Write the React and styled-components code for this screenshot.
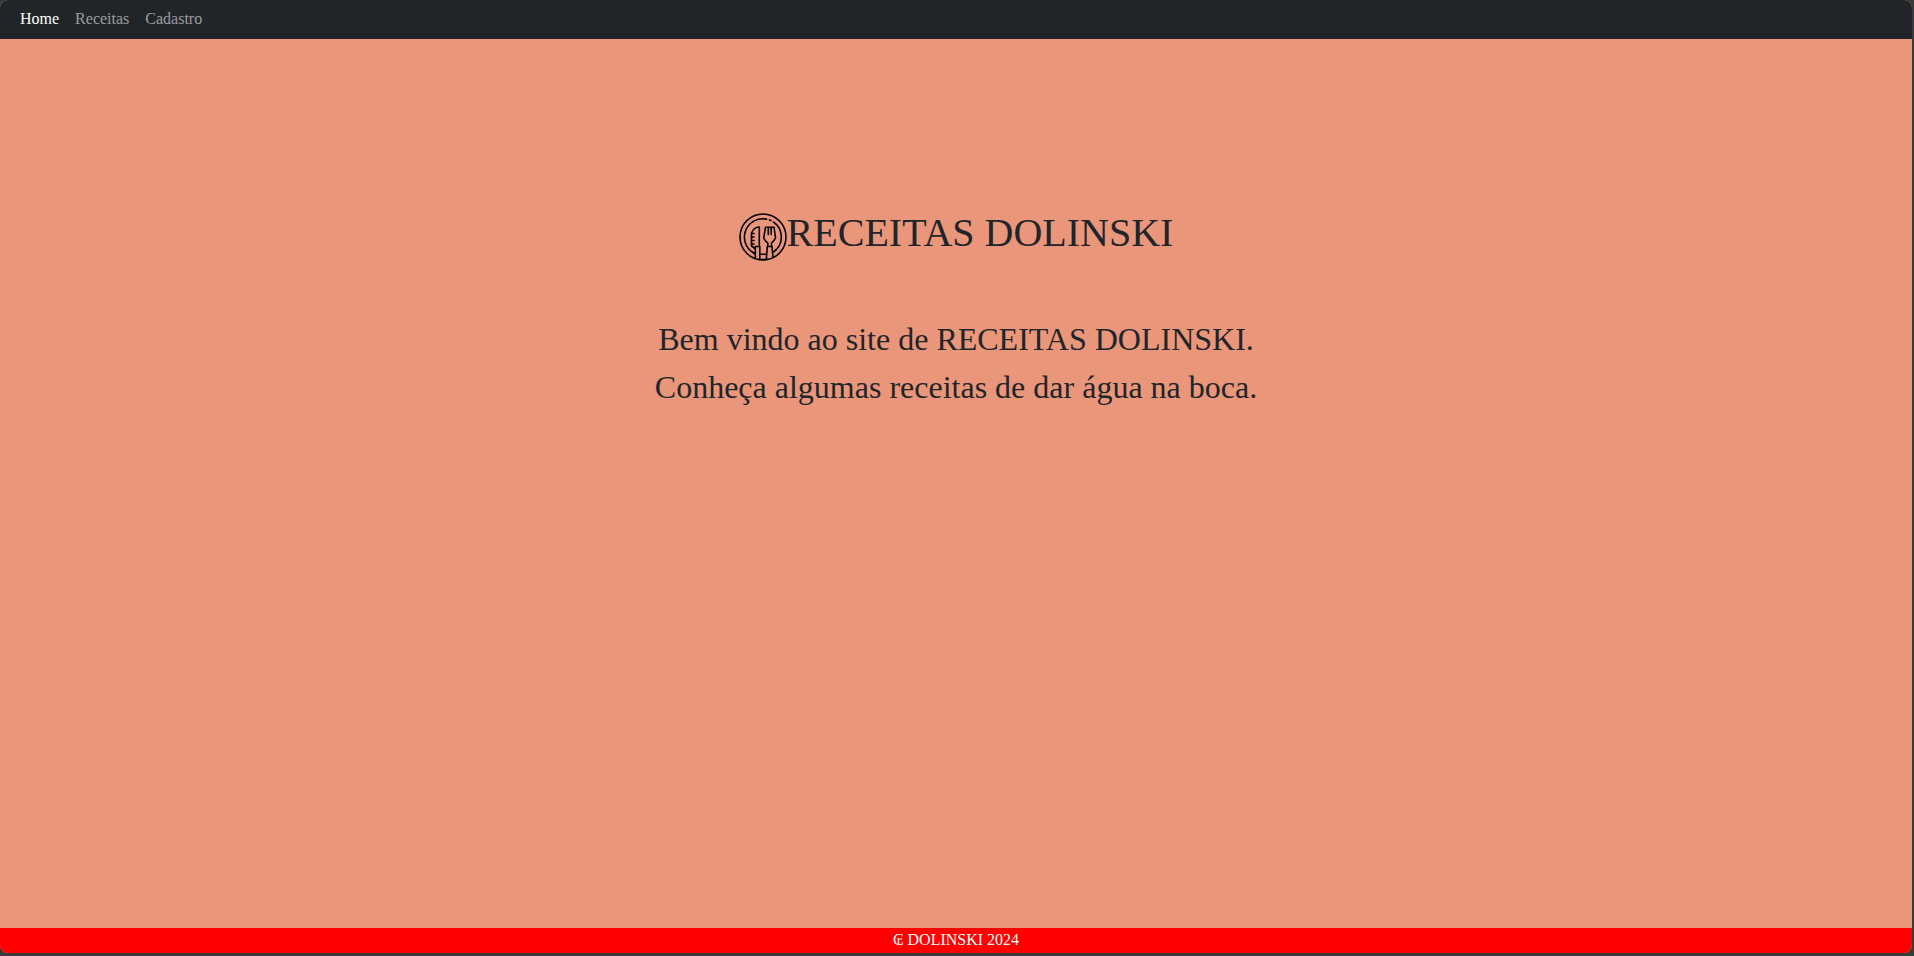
import React from "react";
import styled, { createGlobalStyle } from "styled-components";

const GlobalStyle = createGlobalStyle`
  *, *::before, *::after { box-sizing: border-box; }
  body {
    margin: 0;
    background: #3a3a3a;
    color: #212529;
    font: 16px/24px "Liberation Serif", "Times New Roman", serif;
  }
`;

const Frame = styled.div`
  min-height: 100vh;
  padding: 0 2px 3px 0;
  display: flex;
`;

const Page = styled.div`
  flex: 1;
  display: flex;
  flex-direction: column;
  background: darksalmon;
  border-radius: 8px;
  overflow: hidden;
`;

const Navbar = styled.nav`
  display: flex;
  gap: 16px;
  padding: 7px 20px 8px;
  background: #212529;
`;

const NavLink = styled.a`
  color: ${({ $active }) => ($active ? "#fff" : "#9b9d9e")};
  text-decoration: none;
`;

const Main = styled.main`
  flex: 1;
  padding-top: 170px;
  text-align: center;
`;

const Title = styled.h1`
  display: flex;
  justify-content: center;
  margin: 0 0 54px;
  font-size: 40px;
  font-weight: 400;
  line-height: 48px;
`;

const Logo = styled.svg`
  width: 48px;
  height: 48px;
  margin-top: 4px;
  fill: none;
  stroke: #000;
  stroke-width: 1.6;
  stroke-linecap: round;
  stroke-linejoin: round;
`;

const Welcome = styled.p`
  margin: 0;
  font-size: 32px;
  line-height: 48px;
`;

const Footer = styled.footer`
  padding-bottom: 1px;
  background: red;
  color: #fff;
  text-align: center;
`;

function PlateLogo() {
  return (
    <Logo viewBox="0 0 48 48" aria-hidden="true">
      <circle cx="24" cy="24" r="23" />
      <path d="M14 39.5A18.3 18.3 0 0 1 27.5 6.1M30.5 6.9L32 7.5M34.5 9A18.3 18.3 0 0 1 34.5 39" />
      <path d="M20.3 33V14C16.5 14 13.5 17 12.5 20.5V33L16 35.5" />
      <path d="M12.5 20.5H15M12.5 24H15M12.5 27.5H15M12.5 31H15" />
      <path d="M16.3 45.5V33.5H20.8V46.5M16 41L14 39.5" />
      <path d="M26.5 14.2H35L36.5 24.5C36.5 26.5 34 28.5 32.5 30V33.5H28.8V30C27 28.5 24.8 26.5 24.8 24.5Z" />
      <path d="M29.3 14.5V21.5M32.2 14.5V21.5" />
      <path d="M28.3 33.5L27.3 46.5M33 33.5L34 44.5M20.8 41.3H27.5M20.8 46.5H27.3" />
    </Logo>
  );
}

export default function App() {
  return (
    <>
      <GlobalStyle />
      <Frame>
        <Page>
          <Navbar>
            <NavLink href="#home" $active aria-current="page">Home</NavLink>
            <NavLink href="#receitas">Receitas</NavLink>
            <NavLink href="#cadastro">Cadastro</NavLink>
          </Navbar>
          <Main>
            <Title>
              <PlateLogo />
              RECEITAS DOLINSKI
            </Title>
            <Welcome>
              Bem vindo ao site de RECEITAS DOLINSKI.
              <br />
              Conheça algumas receitas de dar água na boca.
            </Welcome>
          </Main>
          <Footer>₢ DOLINSKI 2024</Footer>
        </Page>
      </Frame>
    </>
  );
}
